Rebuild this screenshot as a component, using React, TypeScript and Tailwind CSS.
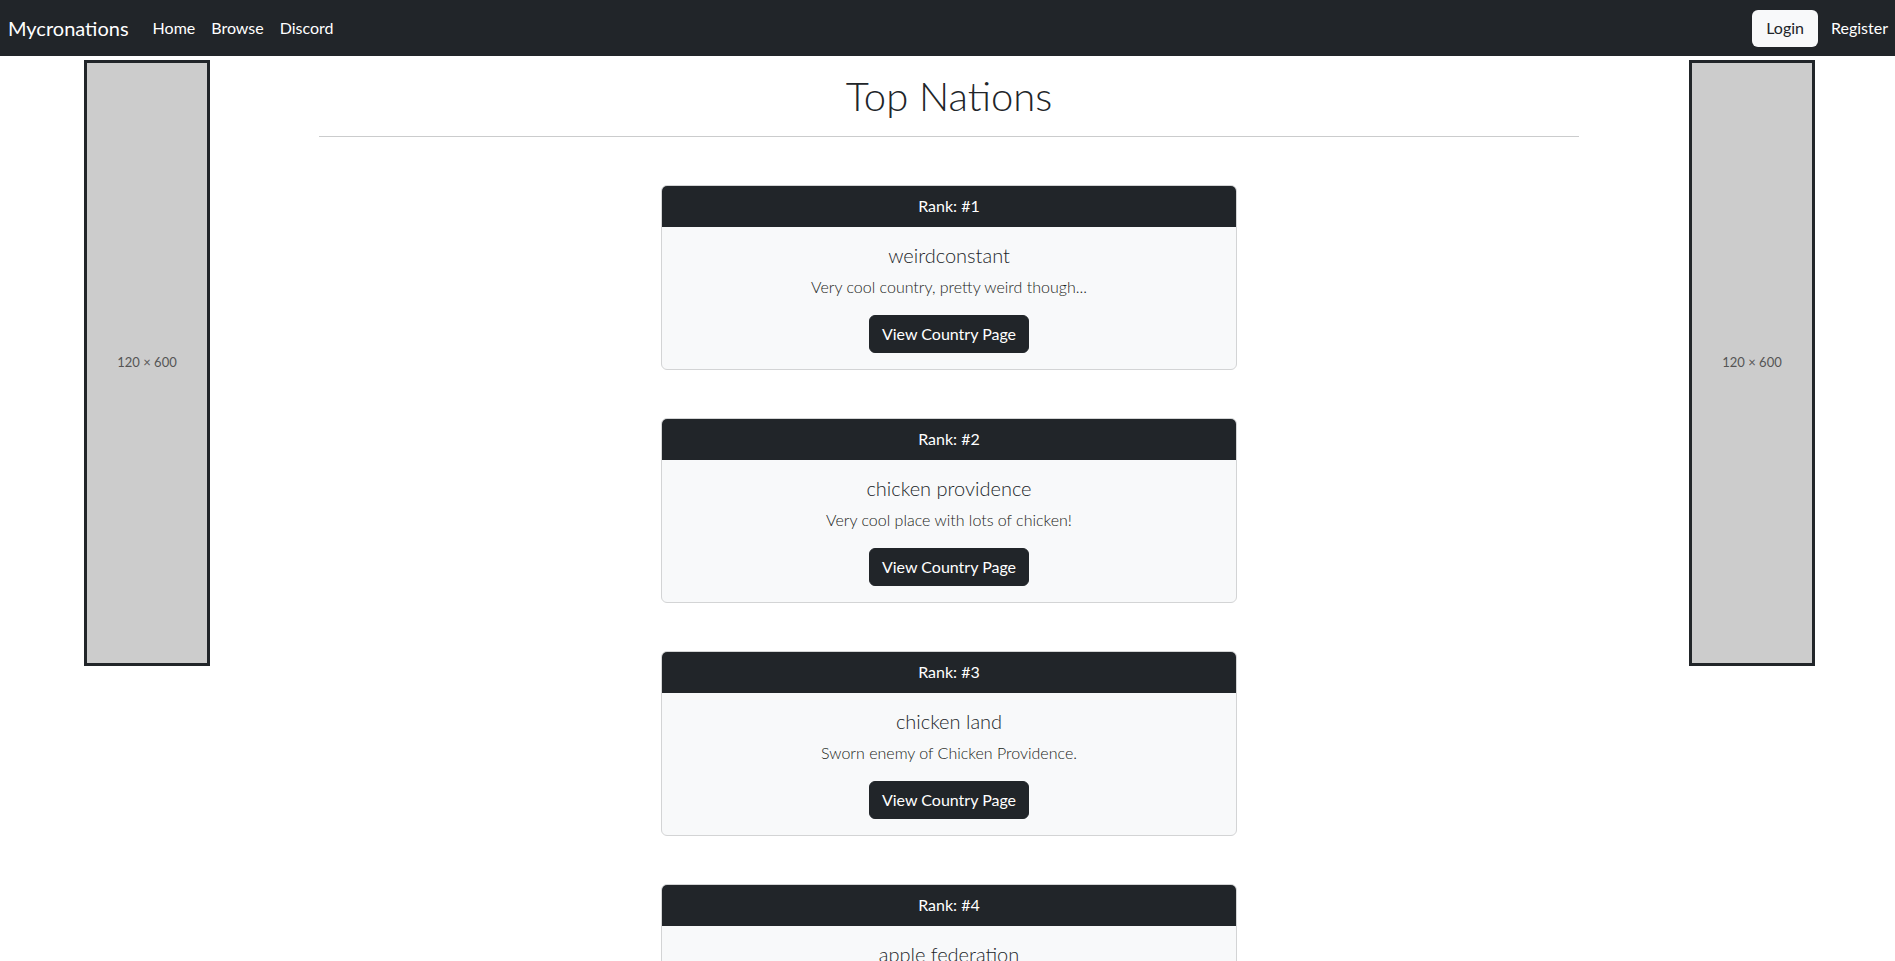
import { useState } from "react"

type Nation = {
  rank: number
  name: string
  blurb: string
}

const nations: Nation[] = [
  { rank: 1, name: "weirdconstant", blurb: "Very cool country, pretty weird though..." },
  { rank: 2, name: "chicken providence", blurb: "Very cool place with lots of chicken!" },
  { rank: 3, name: "chicken land", blurb: "Sworn enemy of Chicken Providence." },
  { rank: 4, name: "apple federation", blurb: "Apples for everyone." },
]

function Navbar() {
  return (
    <nav className="flex h-[56px] items-center bg-[#212529] pl-[8px] pr-[7px] text-white">
      <a href="#" className="mr-[24px] text-[20px] leading-[30px]">
        Mycronations
      </a>
      <div className="flex gap-[16px] text-[16px]">
        <a href="#">Home</a>
        <a href="#">Browse</a>
        <a href="#">Discord</a>
      </div>
      <div className="ml-auto flex items-center gap-[13px] text-[16px]">
        <button className="h-[37px] rounded-md bg-[#f8f9fa] px-[14px] text-[#212529]">
          Login
        </button>
        <a href="#">Register</a>
      </div>
    </nav>
  )
}

function AdBox() {
  return (
    <div className="flex h-[606px] w-[126px] items-center justify-center border-[3px] border-[#212529] bg-[#cccccc] text-[13px] text-[#555555]">
      120 × 600
    </div>
  )
}

function NationCard({ nation }: { nation: Nation }) {
  return (
    <div className="mb-12 w-[576px] overflow-hidden rounded-md border border-[#d3d4d5] bg-[#f8f9fa]">
      <div className="border-b border-[#212529] bg-[#212529] py-2 text-center text-[16px] leading-6 text-white">
        Rank: #{nation.rank}
      </div>
      <div className="p-4 text-center text-[#212529]">
        <h5 className="mb-2 text-[20px] font-light leading-6">{nation.name}</h5>
        <p className="mb-4 text-[16px] font-light leading-6 text-[#1a1d20]">{nation.blurb}</p>
        <a
          href="#"
          className="inline-block rounded-md border border-[#212529] bg-[#212529] px-3 py-[6px] text-[16px] leading-6 text-white"
        >
          View Country Page
        </a>
      </div>
    </div>
  )
}

export default function App() {
  const [list] = useState(nations)

  return (
    <div className="min-h-screen bg-white font-['Lato',sans-serif] text-[#212529]">
      <Navbar />
      <div className="flex">
        <aside className="w-[319px] shrink-0 pl-[84px] pt-1">
          <AdBox />
        </aside>
        <main className="flex-1">
          <h1 className="mt-4 text-center text-[40px] font-light leading-[48px]">Top Nations</h1>
          <hr className="mt-4 mb-12 border-t border-[#cbcccd]" />
          <div className="flex flex-col items-center">
            {list.map((n) => (
              <NationCard key={n.rank} nation={n} />
            ))}
          </div>
        </main>
        <aside className="w-[316px] shrink-0 pl-[110px] pt-1">
          <AdBox />
        </aside>
      </div>
    </div>
  )
}
